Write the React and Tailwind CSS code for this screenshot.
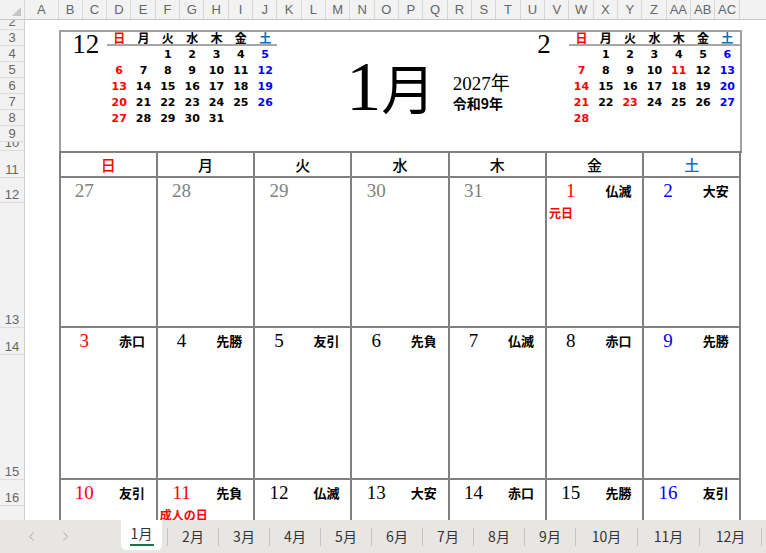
import { ChevronLeft, ChevronRight } from "lucide-react";

const SERIF = "font-['Liberation_Serif','Noto_Sans_CJK_JP',serif]";
const GOTHIC = "font-['Noto_Sans_CJK_JP',sans-serif]";

const COLS = ["B", "C", "D", "E", "F", "G", "H", "I", "J", "K", "L", "M", "N", "O", "P", "Q", "R", "S", "T", "U", "V", "W", "X", "Y", "Z", "AA", "AB", "AC"];

const ROWS = [
  ["2", "h-[10px]"],
  ["3", "h-[16px]"],
  ["4", "h-[16px]"],
  ["5", "h-[16px]"],
  ["6", "h-[16px]"],
  ["7", "h-[16px]"],
  ["8", "h-[16px]"],
  ["9", "h-[16px]"],
  ["10", "h-[9px]"],
  ["11", "h-[27px]"],
  ["12", "h-[25px]"],
  ["13", "h-[125px]"],
  ["14", "h-[27px]"],
  ["15", "h-[125px]"],
  ["16", "h-[26px]"],
  ["17", "h-[40px]"],
];

const DOW = ["日", "月", "火", "水", "木", "金", "土"];

const DEC = [
  [null, null, 1, 2, 3, 4, 5],
  [6, 7, 8, 9, 10, 11, 12],
  [13, 14, 15, 16, 17, 18, 19],
  [20, 21, 22, 23, 24, 25, 26],
  [27, 28, 29, 30, 31, null, null],
];

const FEB = [
  [null, 1, 2, 3, 4, 5, 6],
  [7, 8, 9, 10, 11, 12, 13],
  [14, 15, 16, 17, 18, 19, 20],
  [21, 22, 23, 24, 25, 26, 27],
  [28, null, null, null, null, null, null],
];

const COLOR = {
  grey: "text-[#808080]",
  red: "text-[#ff0000]",
  blue: "text-[#0000ff]",
  black: "text-black",
};

const WEEKS = [
  {
    h: "h-[150px]",
    days: [
      { n: 27, c: "grey" },
      { n: 28, c: "grey" },
      { n: 29, c: "grey" },
      { n: 30, c: "grey" },
      { n: 31, c: "grey" },
      { n: 1, c: "red", r: "仏滅", hol: "元日" },
      { n: 2, c: "blue", r: "大安" },
    ],
  },
  {
    h: "h-[152px]",
    days: [
      { n: 3, c: "red", r: "赤口" },
      { n: 4, c: "black", r: "先勝" },
      { n: 5, c: "black", r: "友引" },
      { n: 6, c: "black", r: "先負" },
      { n: 7, c: "black", r: "仏滅" },
      { n: 8, c: "black", r: "赤口" },
      { n: 9, c: "blue", r: "先勝" },
    ],
  },
  {
    h: "h-[152px]",
    days: [
      { n: 10, c: "red", r: "友引" },
      { n: 11, c: "red", r: "先負", hol: "成人の日" },
      { n: 12, c: "black", r: "仏滅" },
      { n: 13, c: "black", r: "大安" },
      { n: 14, c: "black", r: "赤口" },
      { n: 15, c: "black", r: "先勝" },
      { n: 16, c: "blue", r: "友引" },
    ],
  },
];

const TABS = ["1月", "2月", "3月", "4月", "5月", "6月", "7月", "8月", "9月", "10月", "11月", "12月"];

function MiniMonth({ weeks, holidays = [], className = "" }) {
  return (
    <div className={className}>
      <div className="grid grid-cols-7 h-[14px] border-b-2 border-[#a6a6a6]">
        {DOW.map((d, i) => (
          <div
            key={d}
            className={`flex items-center justify-center text-[12px] leading-none font-bold ${GOTHIC} ${
              i === 0 ? "text-[#ff0000]" : i === 6 ? "text-[#0070c0]" : "text-black"
            }`}
          >
            {d}
          </div>
        ))}
      </div>
      {weeks.map((w, wi) => (
        <div key={wi} className="grid grid-cols-7 h-[16px]">
          {w.map((n, i) => (
            <div
              key={i}
              className={`flex items-center justify-center text-[11px] leading-none font-bold font-['DejaVu_Sans',sans-serif] ${
                i === 0 || holidays.includes(n) ? "text-[#ff0000]" : i === 6 ? "text-[#0000ff]" : "text-black"
              }`}
            >
              {n}
            </div>
          ))}
        </div>
      ))}
    </div>
  );
}

function DayCell({ d }) {
  return (
    <div className="flex flex-col border-r-2 border-b-2 border-[#808080] min-w-0">
      <div className="h-[25px] flex shrink-0">
        <div className={`w-1/2 flex items-center justify-center text-[19px] leading-none ${SERIF} ${COLOR[d.c]}`}>
          {d.n}
        </div>
        <div className={`w-1/2 flex items-center justify-center text-[13px] font-bold text-black ${GOTHIC}`}>
          {d.r}
        </div>
      </div>
      {d.hol && (
        <div className={`pl-[2px] pt-[3px] text-[12px] leading-[14px] font-bold text-[#ff0000] ${GOTHIC}`}>
          {d.hol}
        </div>
      )}
    </div>
  );
}

export default function App() {
  return (
    <div className="w-[766px] h-[553px] overflow-hidden flex flex-col bg-white font-['Liberation_Sans',sans-serif]">
      {/* column headers */}
      <div className="h-[20px] flex shrink-0 bg-[#f2f2f2] border-b border-[#c8c8c8] text-[13px] text-[#666] leading-none">
        <div className="w-[25px] shrink-0 border-r border-[#d6d6d6] flex items-end justify-end pr-[3px] pb-[3px]">
          <svg width="9" height="9" viewBox="0 0 9 9">
            <polygon points="9,0 9,9 0,9" fill="#c4c4c4" />
          </svg>
        </div>
        <div className="w-[33.5px] shrink-0 border-r border-[#d6d6d6] flex items-center justify-center">A</div>
        {COLS.map((c) => (
          <div key={c} className="w-[24.33px] shrink-0 border-r border-[#d6d6d6] flex items-center justify-center">
            {c}
          </div>
        ))}
        <div className="flex-1" />
      </div>

      <div className="flex-1 flex overflow-hidden">
        {/* row headers */}
        <div className="w-[25px] shrink-0 bg-[#f2f2f2] border-r border-[#cfcfcf] flex flex-col">
          {ROWS.map(([n, h]) => (
            <div
              key={n}
              className={`${h} shrink-0 overflow-hidden border-b border-[#dcdcdc] flex items-end justify-center text-[13px] leading-[15px] text-[#666]`}
            >
              {n}
            </div>
          ))}
        </div>

        {/* sheet */}
        <div className="flex-1 pl-[33.5px] pt-[10px] overflow-hidden">
          {/* header box */}
          <div className="w-[683px] h-[121px] border-t-2 border-l-2 border-r-2 border-[#a0a0a0] flex items-start">
            <div className={`w-[46.5px] shrink-0 text-center text-[27px] leading-[24px] pl-[4px] ${SERIF}`}>12</div>
            <MiniMonth weeks={DEC} className="w-[170.33px] shrink-0" />
            <div className="w-[69px] shrink-0" />
            <div className="w-[101.33px] shrink-0 flex items-baseline pt-[20px] text-black">
              <span className={`text-[70px] leading-none ${SERIF}`}>1</span>
              <span className={`text-[54px] leading-none ${GOTHIC}`}>月</span>
            </div>
            <div className="w-[73px] shrink-0 pt-[40px] pl-[5px] text-black">
              <div className={`text-[19px] leading-[23px] ${SERIF}`}>2027年</div>
              <div className={`text-[14px] leading-[17px] font-bold ${GOTHIC}`}>令和9年</div>
            </div>
            <div className={`w-[48.67px] shrink-0 text-center text-[27px] leading-[24px] pr-[2px] ${SERIF}`}>2</div>
            <MiniMonth weeks={FEB} holidays={[11, 23]} className="flex-1 min-w-0" />
          </div>

          {/* calendar grid */}
          <div className="w-[683px] border-l-2 border-t-2 border-[#808080]">
            <div className="grid grid-cols-7 h-[25px]">
              {DOW.map((d, i) => (
                <div
                  key={d}
                  className={`border-r-2 border-b-2 border-[#808080] flex items-center justify-center text-[15px] leading-none font-medium ${GOTHIC} ${
                    i === 0 ? "text-[#ff0000]" : i === 6 ? "text-[#0070c0]" : "text-black"
                  }`}
                >
                  {d}
                </div>
              ))}
            </div>
            {WEEKS.map((w, wi) => (
              <div key={wi} className={`grid grid-cols-7 ${w.h}`}>
                {w.days.map((d, i) => (
                  <DayCell key={i} d={d} />
                ))}
              </div>
            ))}
          </div>
        </div>
      </div>

      {/* sheet tabs */}
      <div className={`h-[33px] shrink-0 bg-[#e8e6e3] flex items-stretch text-[14px] text-[#333] ${GOTHIC}`}>
        <div className="w-[116px] shrink-0 flex items-center text-[#a3a3a3]">
          <ChevronLeft size={15} strokeWidth={1.5} className="ml-[24px]" />
          <ChevronRight size={15} strokeWidth={1.5} className="ml-[19px]" />
        </div>
        {TABS.map((t, i) => (
          <div key={t} className="flex items-stretch">
            {i === 0 ? (
              <div className="w-[51px] px-[5px] flex">
                <div className="flex-1 bg-white rounded-b-[5px] h-[30px] flex flex-col items-center justify-center">
                  <span className="leading-[18px]">{t}</span>
                  <span className="mt-[2px] h-[2px] w-[24px] bg-[#1e7145]" />
                </div>
              </div>
            ) : (
              <div className={`${t.length > 2 ? "w-[61px]" : "w-[50px]"} flex items-center justify-center`}>{t}</div>
            )}
            <span className="w-px h-[18px] self-center bg-[#c6c4c1]" />
          </div>
        ))}
      </div>
    </div>
  );
}
